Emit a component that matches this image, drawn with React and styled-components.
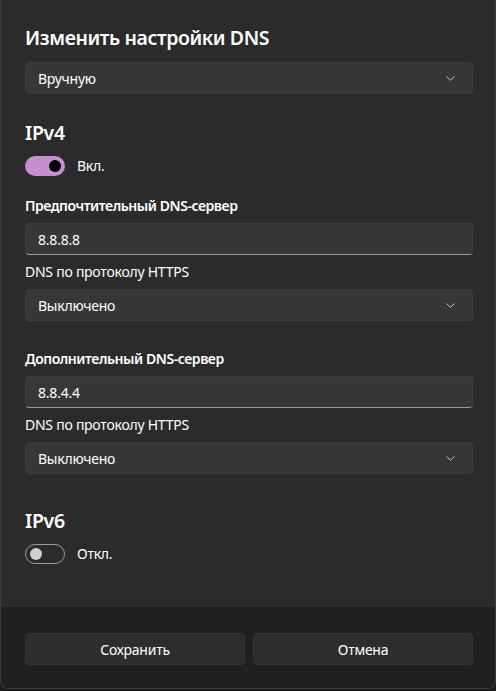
import React from "react";
import styled, { createGlobalStyle } from "styled-components";

const Global = createGlobalStyle`
  html, body { margin: 0; padding: 0; background: #1c1c1c; }
  body { font-family: "Segoe UI", "Noto Sans", "Open Sans", sans-serif; color: #fff; }
  * { box-sizing: border-box; }
`;

const Dialog = styled.div`
  width: 496px;
  height: 689px;
  display: flex;
  flex-direction: column;
  background: #2b2b2b;
  border: 1px solid #3c3c3c;
  border-top: none;
  border-radius: 0 0 8px 8px;
  overflow: hidden;
`;

const Body = styled.div`
  flex: 1;
  display: flex;
  flex-direction: column;
  padding: 24px 22px 0 24px;
`;

const Title = styled.h1`
  margin: 0;
  font-size: 19.5px;
  letter-spacing: -0.4px;
  font-weight: 600;
  line-height: 28px;
  height: 28px;
`;

const SectionTitle = styled.h2`
  margin: ${(p) => p.$top}px 0 0;
  font-size: 19.5px;
  letter-spacing: -0.3px;
  font-weight: 600;
  line-height: 28px;
  height: 28px;
`;

const FieldLabel = styled.div`
  margin-top: ${(p) => p.$top}px;
  font-size: 14px;
  line-height: 20px;
  letter-spacing: ${(p) => (p.$bold ? "-0.45px" : "-0.25px")};
  font-weight: ${(p) => (p.$bold ? 600 : 400)};
  color: #fff;
`;

const Select = styled.div`
  margin-top: ${(p) => p.$top}px;
  height: 32px;
  display: flex;
  align-items: center;
  justify-content: space-between;
  padding: 0 17px 0 12px;
  background: #373737;
  border: 1px solid #3d3d3d;
  border-radius: 4px;
  font-size: 14px;
  letter-spacing: -0.25px;
`;

const Input = styled.div`
  margin-top: ${(p) => p.$top}px;
  height: 32px;
  display: flex;
  align-items: center;
  padding: 0 12px;
  background: #373737;
  border: 1px solid #3d3d3d;
  border-bottom: 1px solid #9a9a9a;
  border-radius: 4px;
  font-size: 14px;
  letter-spacing: -0.2px;
`;

const ToggleRow = styled.div`
  margin-top: ${(p) => p.$top}px;
  display: flex;
  align-items: center;
  gap: 12px;
  font-size: 14px;
  line-height: 20px;
  letter-spacing: -0.25px;
`;

const Track = styled.div`
  width: 40px;
  height: 20px;
  border-radius: 10px;
  display: flex;
  align-items: center;
  padding: 0 4px;
  justify-content: ${(p) => (p.$on ? "flex-end" : "flex-start")};
  background: ${(p) => (p.$on ? "#c78fd2" : "transparent")};
  border: ${(p) => (p.$on ? "none" : "1px solid #9d9d9d")};
`;

const Knob = styled.div`
  width: 12px;
  height: 12px;
  border-radius: 50%;
  background: ${(p) => (p.$on ? "#000" : "#cfcfcf")};
`;

const Footer = styled.div`
  height: 81px;
  display: grid;
  grid-template-columns: 1fr 1fr;
  gap: 8px;
  padding: 25px 22px 0 24px;
  background: #202020;
  border-top: 1px solid #1d1d1d;
`;

const Button = styled.div`
  height: 32px;
  display: flex;
  align-items: center;
  justify-content: center;
  background: #2d2d2d;
  border: 1px solid #343434;
  border-radius: 4px;
  font-size: 14px;
  letter-spacing: -0.25px;
`;

const Chevron = () => (
  <svg width="9" height="5" viewBox="0 0 9 5" fill="none">
    <path d="M0.8 0.8l3.7 3.5 3.7-3.5" stroke="#c8c8c8" strokeWidth="1" strokeLinecap="round" strokeLinejoin="round" />
  </svg>
);

const Dropdown = ({ top, children }) => (
  <Select $top={top}>
    <span>{children}</span>
    <Chevron />
  </Select>
);

const Toggle = ({ on, top, label }) => (
  <ToggleRow $top={top}>
    <Track $on={on}>
      <Knob $on={on} />
    </Track>
    <span>{label}</span>
  </ToggleRow>
);

export default function App() {
  return (
    <>
      <Global />
      <Dialog>
        <Body>
          <Title>Изменить настройки DNS</Title>
          <Dropdown top={10}>Вручную</Dropdown>
          <SectionTitle $top={25}>IPv4</SectionTitle>
          <Toggle on top={9} label="Вкл." />
          <FieldLabel $bold $top={20}>Предпочтительный DNS-сервер</FieldLabel>
          <Input $top={7}>8.8.8.8</Input>
          <FieldLabel $top={7}>DNS по протоколу HTTPS</FieldLabel>
          <Dropdown top={7}>Выключено</Dropdown>
          <FieldLabel $bold $top={28}>Дополнительный DNS-сервер</FieldLabel>
          <Input $top={7}>8.8.4.4</Input>
          <FieldLabel $top={7}>DNS по протоколу HTTPS</FieldLabel>
          <Dropdown top={7}>Выключено</Dropdown>
          <SectionTitle $top={33}>IPv6</SectionTitle>
          <Toggle top={9} label="Откл." />
        </Body>
        <Footer>
          <Button>Сохранить</Button>
          <Button>Отмена</Button>
        </Footer>
      </Dialog>
    </>
  );
}
